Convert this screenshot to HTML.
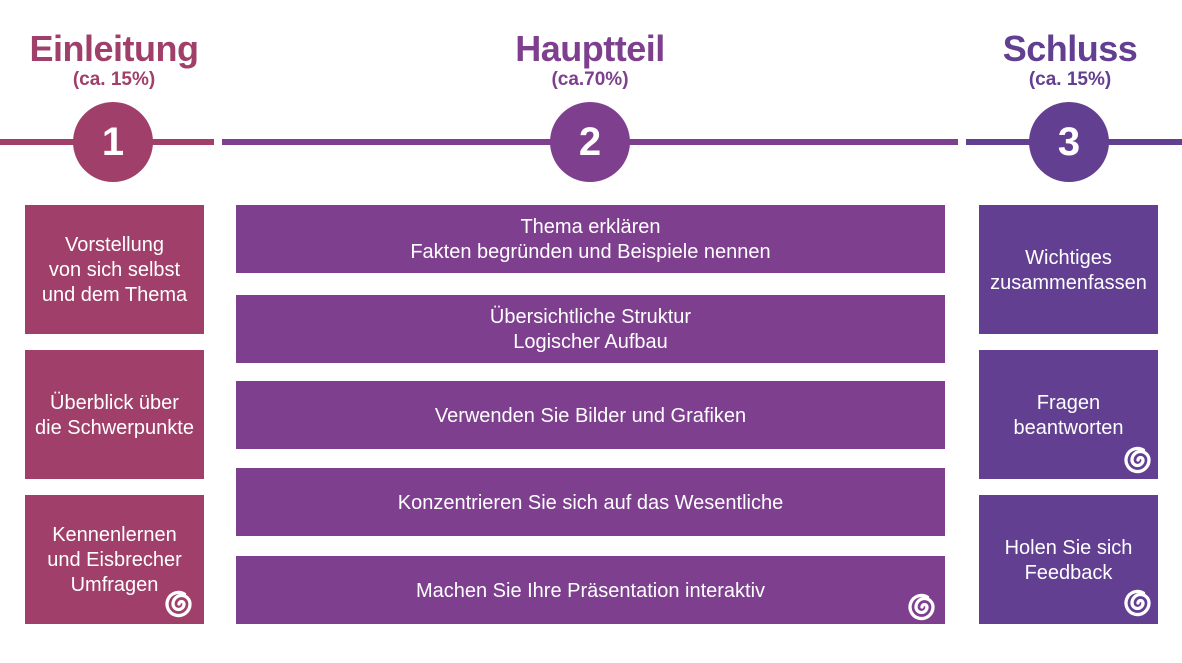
<!DOCTYPE html>
<html><head><meta charset="utf-8"><style>
body{margin:0;width:1182px;height:663px;background:#fff;position:relative;overflow:hidden;font-family:"Liberation Sans",sans-serif}
.a{position:absolute}
.t{text-align:center;font-weight:bold}
.h{font-size:36px;letter-spacing:-0.5px}
.s{font-size:19px}
.ln{height:6px;top:139px}
.c{width:80px;height:80px;border-radius:50%;top:102px;color:#fff;font-size:40px;font-weight:bold;display:flex;align-items:center;justify-content:center}
.b{display:flex;align-items:center;justify-content:center;text-align:center;color:#fff;font-size:20px;line-height:25px;padding-top:2px;box-sizing:border-box}
.L{background:#A0406A}.M{background:#7E3F8F}.R{background:#633F91}
svg{position:absolute}
</style></head><body>
<div class="a t h" style="left:0;width:228px;top:28px;color:#A0406A">Einleitung</div>
<div class="a t s" style="left:0;width:228px;top:69px;color:#A0406A">(ca. 15%)</div>
<div class="a t h" style="left:390px;width:400px;top:28px;color:#7E3F8F">Hauptteil</div>
<div class="a t s" style="left:390px;width:400px;top:69px;color:#7E3F8F">(ca.70%)</div>
<div class="a t h" style="left:970px;width:200px;top:28px;color:#633F91">Schluss</div>
<div class="a t s" style="left:970px;width:200px;top:69px;color:#633F91">(ca. 15%)</div>

<div class="a ln L" style="left:0;width:214px"></div>
<div class="a ln M" style="left:222px;width:736px"></div>
<div class="a ln R" style="left:966px;width:216px"></div>
<div class="a c L" style="left:73px">1</div>
<div class="a c M" style="left:550px">2</div>
<div class="a c R" style="left:1029px">3</div>

<div class="a b L" style="left:25px;top:205px;width:179px;height:129px">Vorstellung<br>von sich selbst<br>und dem Thema</div>
<div class="a b L" style="left:25px;top:350px;width:179px;height:129px">Überblick über<br>die Schwerpunkte</div>
<div class="a b L" style="left:25px;top:495px;width:179px;height:129px">Kennenlernen<br>und Eisbrecher<br>Umfragen</div>

<div class="a b M" style="left:236px;top:205px;width:709px;height:68px">Thema erklären<br>Fakten begründen und Beispiele nennen</div>
<div class="a b M" style="left:236px;top:295px;width:709px;height:68px">Übersichtliche Struktur<br>Logischer Aufbau</div>
<div class="a b M" style="left:236px;top:381px;width:709px;height:68px">Verwenden Sie Bilder und Grafiken</div>
<div class="a b M" style="left:236px;top:468px;width:709px;height:68px">Konzentrieren Sie sich auf das Wesentliche</div>
<div class="a b M" style="left:236px;top:556px;width:709px;height:68px">Machen Sie Ihre Präsentation interaktiv</div>

<div class="a b R" style="left:979px;top:205px;width:179px;height:129px">Wichtiges<br>zusammenfassen</div>
<div class="a b R" style="left:979px;top:350px;width:179px;height:129px">Fragen<br>beantworten</div>
<div class="a b R" style="left:979px;top:495px;width:179px;height:129px">Holen Sie sich<br>Feedback</div>

<svg style="left:163px;top:587px" width="34" height="34" viewBox="0 0 34 34"><path d="M16 17a2.5 2.5 0 1 1 5 0a5.5 5.5 0 0 1-11 0a8.5 8.5 0 0 1 17 0a11.5 11.5 0 1 1-5.5-9.8" fill="none" stroke="#fff" stroke-width="3.3" stroke-linecap="round"/></svg>
<svg style="left:906px;top:590px" width="34" height="34" viewBox="0 0 34 34"><path d="M16 17a2.5 2.5 0 1 1 5 0a5.5 5.5 0 0 1-11 0a8.5 8.5 0 0 1 17 0a11.5 11.5 0 1 1-5.5-9.8" fill="none" stroke="#fff" stroke-width="3.3" stroke-linecap="round"/></svg>
<svg style="left:1122px;top:443px" width="34" height="34" viewBox="0 0 34 34"><path d="M16 17a2.5 2.5 0 1 1 5 0a5.5 5.5 0 0 1-11 0a8.5 8.5 0 0 1 17 0a11.5 11.5 0 1 1-5.5-9.8" fill="none" stroke="#fff" stroke-width="3.3" stroke-linecap="round"/></svg>
<svg style="left:1122px;top:586px" width="34" height="34" viewBox="0 0 34 34"><path d="M16 17a2.5 2.5 0 1 1 5 0a5.5 5.5 0 0 1-11 0a8.5 8.5 0 0 1 17 0a11.5 11.5 0 1 1-5.5-9.8" fill="none" stroke="#fff" stroke-width="3.3" stroke-linecap="round"/></svg>
</body></html>
